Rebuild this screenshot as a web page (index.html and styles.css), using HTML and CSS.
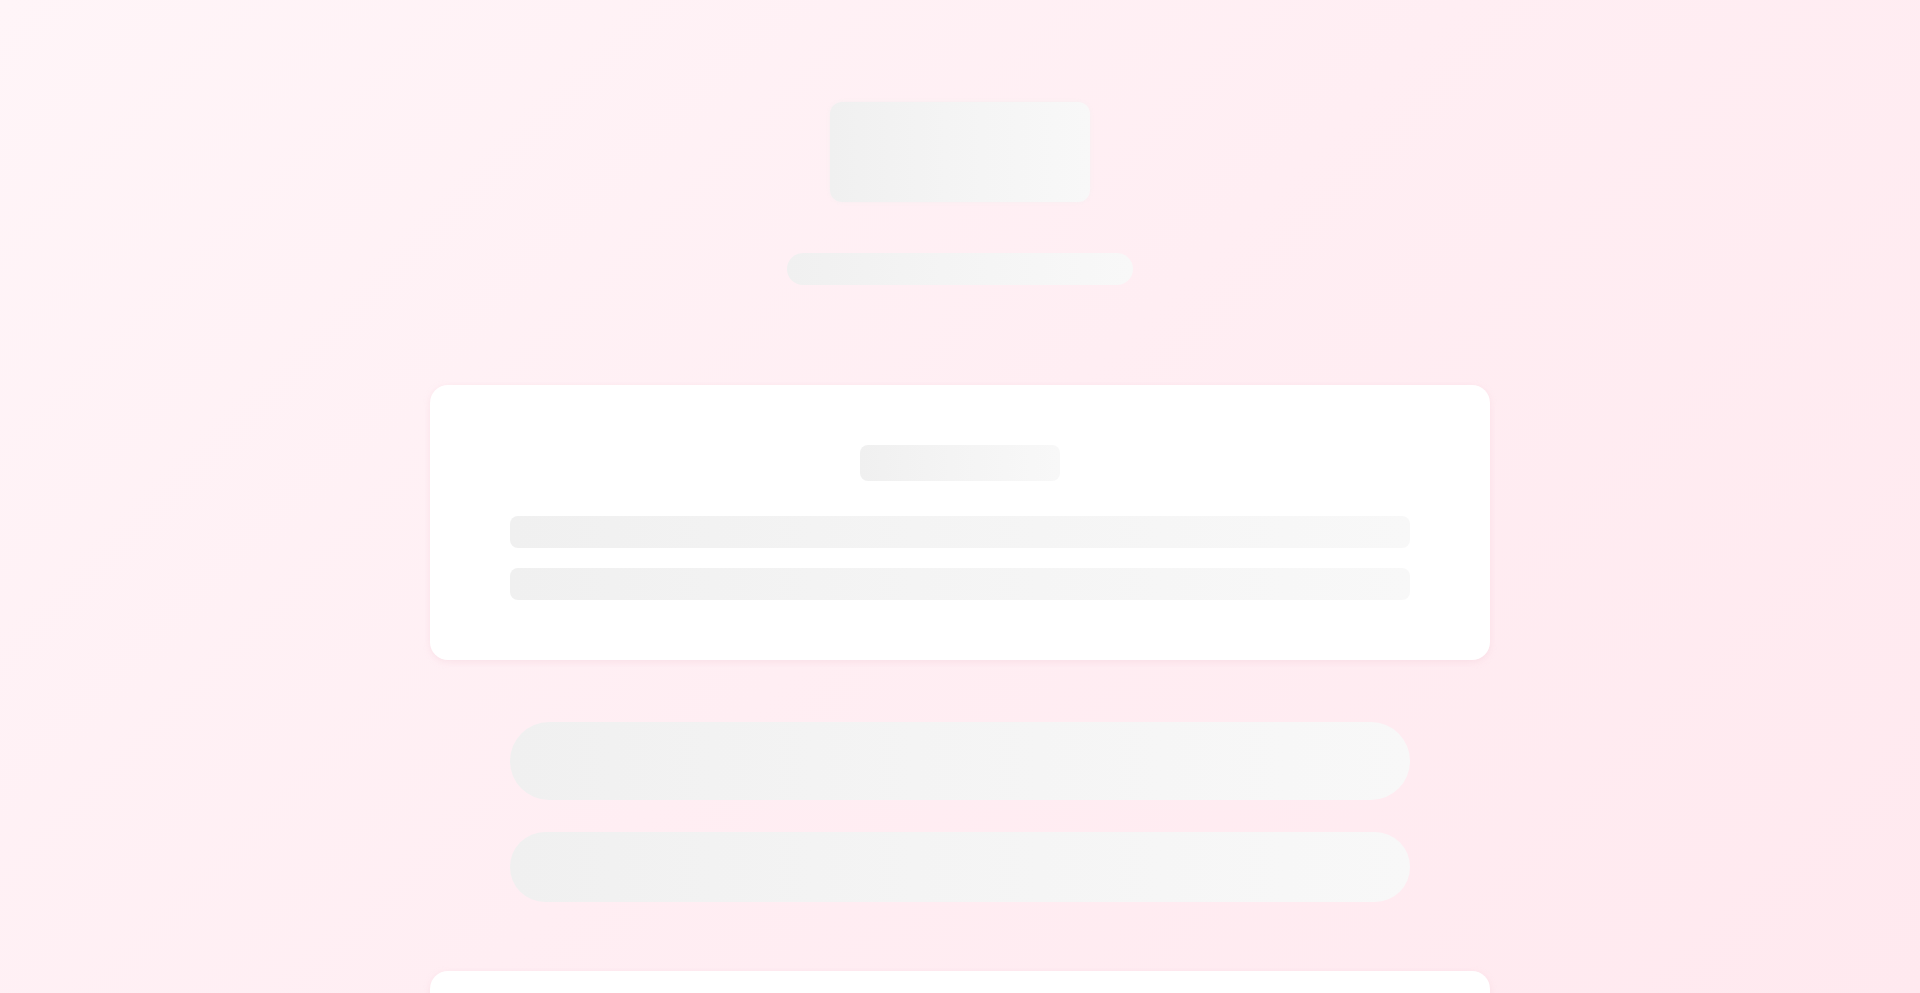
FILE: index.html
```html
<!DOCTYPE html>
<html lang="en">
<head>
<meta charset="utf-8">
<title>Loading</title>
<link rel="stylesheet" href="styles.css">
</head>
<body>
<main class="page">
  <header class="hero">
    <div class="skel skel-logo"></div>
    <div class="skel skel-subtitle"></div>
  </header>
  <section class="card card-main">
    <div class="skel skel-title"></div>
    <div class="skel skel-line"></div>
    <div class="skel skel-line"></div>
  </section>
  <div class="actions">
    <div class="skel skel-btn skel-btn-lg"></div>
    <div class="skel skel-btn skel-btn-md"></div>
  </div>
  <section class="card card-next"></section>
</main>
</body>
</html>
```
FILE: styles.css
```css
* { box-sizing: border-box; }
html, body { margin: 0; padding: 0; height: 100%; }
body {
  font-family: "Inter", "Liberation Sans", sans-serif;
  background: linear-gradient(135deg, #fff5f8 0%, #ffeef3 50%, #ffe9ef 100%);
  overflow: hidden;
}
.page {
  width: 1060px;
  margin: 0 auto;
  padding-top: 102px;
  display: flex;
  flex-direction: column;
  align-items: center;
}
.hero {
  display: flex;
  flex-direction: column;
  align-items: center;
}
.skel {
  background: linear-gradient(90deg, #f0f0f0 0%, #f4f4f4 45%, #f8f8f8 100%);
}
.skel-logo {
  width: 260px;
  height: 100px;
  border-radius: 12px;
  box-shadow: 0 0 4px rgba(240, 240, 240, 0.6);
}
.skel-subtitle {
  width: 346px;
  height: 32px;
  border-radius: 16px;
  margin-top: 51px;
}
.card {
  width: 1060px;
  background: #ffffff;
  border-radius: 18px;
  box-shadow: 0 2px 6px rgba(240, 200, 212, 0.35);
}
.card-main {
  margin-top: 100px;
  padding: 60px 80px;
  display: flex;
  flex-direction: column;
  align-items: center;
}
.skel-title {
  width: 200px;
  height: 36px;
  border-radius: 8px;
  margin-bottom: 35px;
}
.skel-line {
  width: 900px;
  height: 32px;
  border-radius: 8px;
}
.skel-line + .skel-line { margin-top: 20px; }
.actions {
  margin-top: 62px;
  display: flex;
  flex-direction: column;
  gap: 32px;
  width: 900px;
}
.skel-btn {
  width: 900px;
  border-radius: 40px;
}
.skel-btn-lg { height: 78px; }
.skel-btn-md { height: 70px; }
.card-next {
  margin-top: 69px;
  height: 200px;
}
```
